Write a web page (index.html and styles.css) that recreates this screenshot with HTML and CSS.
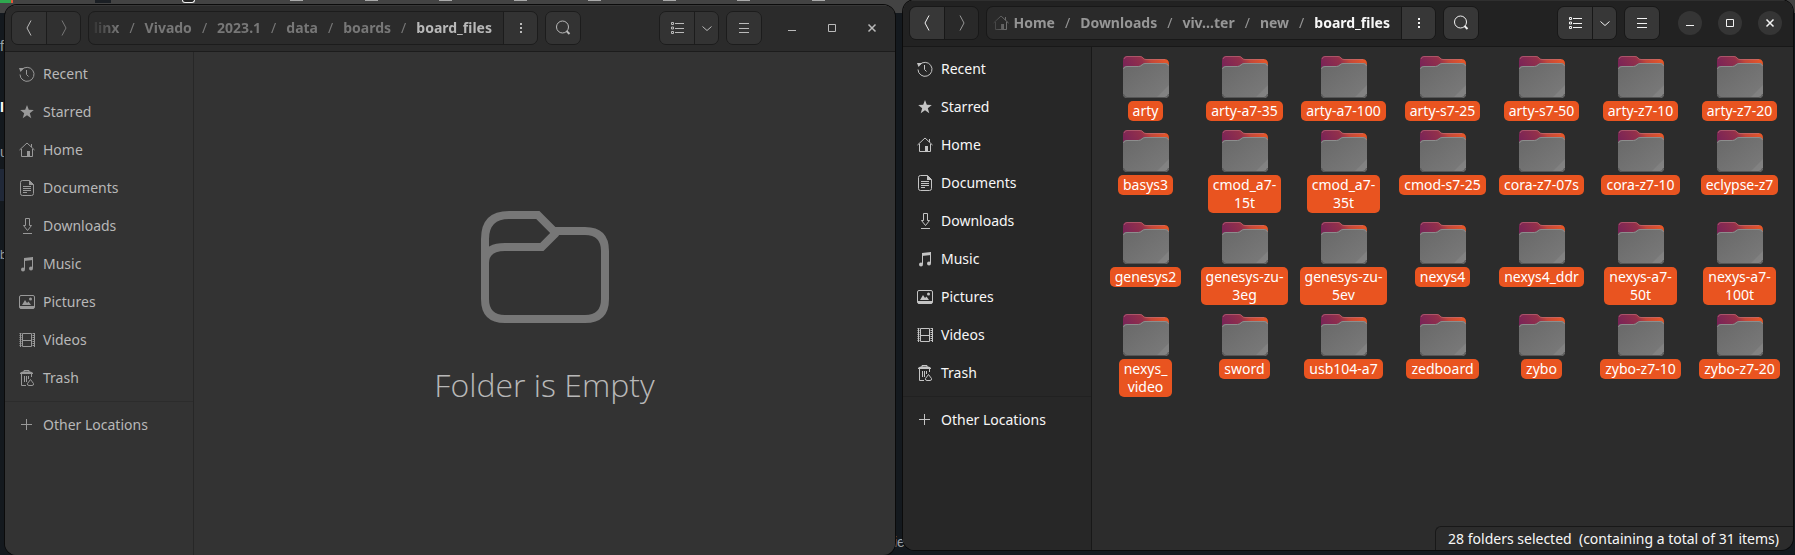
FILE: index.html
```html
<!DOCTYPE html>
<html lang="en">
<head>
<meta charset="utf-8">
<title>Files</title>
<link rel="stylesheet" href="styles.css">
</head>
<body>
<svg class="defs" aria-hidden="true">
  <defs>
    <linearGradient id="folder-back" x1="0" y1="0.4" x2="1" y2="0.1">
      <stop offset="0" stop-color="#7a2457"/><stop offset="0.42" stop-color="#93304b"/><stop offset="0.6" stop-color="#c4483a"/><stop offset="1" stop-color="#ee5a24"/>
    </linearGradient>
    <linearGradient id="folder-front" x1="0" y1="0" x2="1" y2="1">
      <stop offset="0" stop-color="#686868"/><stop offset="1" stop-color="#7b7b7b"/>
    </linearGradient>
  </defs>
  <symbol id="folder" viewBox="0 0 46 42">
    <path d="M0 5Q0 0 4 0H17Q19 0 20 1.500T23 3H41Q46 3 46 8V20H0Z" fill="url(#folder-back)"/>
    <path d="M1 3Q2 .5 4 .5H17Q19 .5 20 2T23 3.500H42" fill="none" stroke="#c0707a" stroke-opacity=".6"/>
    <path d="M0 13Q0 10 4 10H15Q17 10 18.500 8.500T22 7H42Q46 7 46 11V38Q46 42 42 42H4Q0 42 0 38Z" fill="url(#folder-front)"/>
    <path d="M.5 13Q1 10.500 4 10.500H15.500Q17.500 10.500 19 9T22 7.500H42Q45 7.500 45.500 10" fill="none" stroke="#8d8d8d"/>
    <path d="M46 29V38Q46 42 42 42H33Z" fill="#fff" fill-opacity=".07"/>
    <path d="M.5 38Q1 41.500 4 41.500H42Q45 41.500 45.500 38" fill="none" stroke="#555"/>
  </symbol>
  <symbol id="back" viewBox="0 0 16 16"><path d="M10 .5L6 8l4 7.500"/></symbol>
  <symbol id="forward" viewBox="0 0 16 16"><path d="M6 .5L10 8l-4 7.500"/></symbol>
  <symbol id="dots" viewBox="0 0 16 16"><path class="solid" d="M7 3h2v2H7zM7 7h2v2H7zM7 11h2v2H7z"/></symbol>
  <symbol id="search" viewBox="0 0 16 16"><circle cx="7.500" cy="7" r="6"/><path d="M11.500 11l3 3" stroke-width="2"/></symbol>
  <symbol id="list" viewBox="0 0 16 16"><path d="M2.500 2.500h2v2h-2zM2.500 7h2v2h-2zM2.500 11.500h2v2h-2zM6 3.500h9M6 8.500h9M6 12.500h9"/></symbol>
  <symbol id="down" viewBox="0 0 16 16"><path d="M3.500 6.500L8 10.500l4.500-4"/></symbol>
  <symbol id="menu" viewBox="0 0 16 16"><path d="M3 3.500h10M3 8.500h10M3 12.500h10"/></symbol>
  <symbol id="minimize" viewBox="0 0 16 16"><path d="M4 10.500h8"/></symbol>
  <symbol id="maximize" viewBox="0 0 16 16"><path d="M4.500 4.500h7v7h-7z"/></symbol>
  <symbol id="close" viewBox="0 0 16 16"><path d="M4.500 4.500l7 7m0-7l-7 7" stroke-width="1.500"/></symbol>
  <symbol id="recent" viewBox="0 0 16 16"><path d="M2.500 4A7 7 0 1 1 1 8.500"/><path d="M7.500 4v4.500l2 2"/><path class="solid" d="M0 2l5 0-3.500 4z"/></symbol>
  <symbol id="star" viewBox="0 0 16 16"><path class="solid" d="M8 1l1.800 4.800 5 .2-4 3.200 1.500 5L8 11.300l-4.300 2.900 1.500-5L1.200 6l5-.2z"/></symbol>
  <symbol id="home" viewBox="0 0 16 16"><path d="M.5 8L8 1l7.500 7M2.500 7v7.500h11V7M12.500 2v3"/><path class="solid" d="M8 9h3v5.500H8z"/></symbol>
  <symbol id="documents" viewBox="0 0 16 16"><path d="M3.500.5h7l4 4v9q0 2-2 2h-9q-2 0-2-2v-11q0-2 2-2zM4 6.500h8M4 8.500h8M4 10.500h8M4 12.500h4"/><path class="solid" d="M10 0v5h5z"/></symbol>
  <symbol id="downloads" viewBox="0 0 16 16"><path d="M6.500.5h4v7h2l-4 5-4-5h2zM4 15.500h9"/></symbol>
  <symbol id="music" viewBox="0 0 16 16"><path d="M5.500 13V2M13.500 12V1"/><path class="solid" d="M5 2l9-1v3l-9 1z"/><circle class="solid" cx="4" cy="13.500" r="2"/><circle class="solid" cx="12" cy="12.500" r="2"/></symbol>
  <symbol id="pictures" viewBox="0 0 16 16"><rect x=".5" y="1.500" width="15" height="13" rx="1.500"/><path class="solid" d="M1 12h14v2.500H1zM3 11l3-5 2 3 1.500-1.500L12 11z"/><circle class="solid" cx="11.500" cy="5" r="1.500"/></symbol>
  <symbol id="videos" viewBox="0 0 16 16"><path d="M3.500 1.500h9v13h-9zM3 8.500h10"/><path d="M1.500 1v14M14.500 1v14" stroke-width="2" stroke-dasharray="1 1"/><path d="M1.500 1v14M15.500 1v14"/></symbol>
  <symbol id="trash" viewBox="0 0 16 16"><path d="M5 2.500V.5h5v2M1 3.500h13M2.500 4v11.500H7M12.500 4v3M5.500 6v6M7.500 6v6M9.500 6v3"/><path class="solid" d="M1 3q1-1.500 3-1.500h7q2 0 3 1.500v1H1z"/><path d="M11.500 9.500l3 4q.5 2-1.500 2h-3q-2 0-1.500-2z"/></symbol>
  <symbol id="plus" viewBox="0 0 16 16"><path d="M2 7.500h11M7.500 2v11"/></symbol>
  <symbol id="empty" viewBox="0 0 16 16"><path d="M.5 7.500V4.500Q.5 1.500 3.500 1.500H7.100L9.100 3.500H13Q15.500 3.500 15.500 6V12Q15.500 14.500 13 14.500H3Q.5 14.500 .5 12V7.500Q.5 5.500 3 5.500H7.600L9.400 3.700"/></symbol>
</svg>

<div class="backdrop" aria-hidden="true">
  <i class="chip chip-green"></i><i class="chip chip-dark"></i><i class="chip chip-white"></i>
  <div class="tabs"><i></i><i></i><i></i><i></i><i></i><i></i><i></i><i></i></div>
  <i class="edge-band"></i>
  <span class="edge-text edge-f">f</span>
  <span class="edge-text edge-i">I</span>
  <span class="edge-text edge-u">u</span>
  <span class="edge-text edge-ba">ba</span>
  <span class="edge-text edge-ie">ie</span>
</div>

<main class="desktop">
  <section class="window inactive" aria-label="board_files, empty">
    <header class="header">
      <div class="group">
        <button class="btn" aria-label="Back"><svg class="icon"><use href="#back"/></svg></button>
        <button class="btn off" aria-label="Forward"><svg class="icon"><use href="#forward"/></svg></button>
      </div>
      <div class="group path">
        <nav class="crumbs" aria-label="Path">
          <button>linx</button><span>/</span><button>Vivado</button><span>/</span><button>2023.1</button><span>/</span><button>data</button><span>/</span><button>boards</button><span>/</span><button class="current">board_files</button>
        </nav>
        <button class="btn" aria-label="Folder menu"><svg class="icon"><use href="#dots"/></svg></button>
      </div>
      <div class="group"><button class="btn" aria-label="Search"><svg class="icon"><use href="#search"/></svg></button></div>
      <div class="group push">
        <button class="btn" aria-label="List view"><svg class="icon"><use href="#list"/></svg></button>
        <button class="btn narrow" aria-label="View options"><svg class="icon"><use href="#down"/></svg></button>
      </div>
      <div class="group"><button class="btn" aria-label="Menu"><svg class="icon"><use href="#menu"/></svg></button></div>
      <div class="controls">
        <button aria-label="Minimize"><svg class="icon"><use href="#minimize"/></svg></button>
        <button aria-label="Maximize"><svg class="icon"><use href="#maximize"/></svg></button>
        <button aria-label="Close"><svg class="icon"><use href="#close"/></svg></button>
      </div>
    </header>
    <div class="body">
      <nav class="sidebar" aria-label="Places">
        <a href="#"><svg class="icon"><use href="#recent"/></svg>Recent</a>
        <a href="#"><svg class="icon"><use href="#star"/></svg>Starred</a>
        <a href="#"><svg class="icon"><use href="#home"/></svg>Home</a>
        <a href="#"><svg class="icon"><use href="#documents"/></svg>Documents</a>
        <a href="#"><svg class="icon"><use href="#downloads"/></svg>Downloads</a>
        <a href="#"><svg class="icon"><use href="#music"/></svg>Music</a>
        <a href="#"><svg class="icon"><use href="#pictures"/></svg>Pictures</a>
        <a href="#"><svg class="icon"><use href="#videos"/></svg>Videos</a>
        <a href="#"><svg class="icon"><use href="#trash"/></svg>Trash</a>
        <hr>
        <a href="#"><svg class="icon"><use href="#plus"/></svg>Other Locations</a>
      </nav>
      <div class="content empty">
        <svg class="empty-icon"><use href="#empty"/></svg>
        <p>Folder is Empty</p>
      </div>
    </div>
  </section>

  <section class="window active" aria-label="board_files">
    <header class="header">
      <div class="group">
        <button class="btn" aria-label="Back"><svg class="icon"><use href="#back"/></svg></button>
        <button class="btn off" aria-label="Forward"><svg class="icon"><use href="#forward"/></svg></button>
      </div>
      <div class="group path">
        <nav class="crumbs" aria-label="Path">
          <button><svg class="icon"><use href="#home"/></svg>Home</button><span>/</span><button>Downloads</button><span>/</span><button>viv…ter</button><span>/</span><button>new</button><span>/</span><button class="current">board_files</button>
        </nav>
        <button class="btn" aria-label="Folder menu"><svg class="icon"><use href="#dots"/></svg></button>
      </div>
      <div class="group"><button class="btn" aria-label="Search"><svg class="icon"><use href="#search"/></svg></button></div>
      <div class="group push">
        <button class="btn" aria-label="List view"><svg class="icon"><use href="#list"/></svg></button>
        <button class="btn narrow" aria-label="View options"><svg class="icon"><use href="#down"/></svg></button>
      </div>
      <div class="group"><button class="btn" aria-label="Menu"><svg class="icon"><use href="#menu"/></svg></button></div>
      <div class="controls">
        <button aria-label="Minimize"><svg class="icon"><use href="#minimize"/></svg></button>
        <button aria-label="Maximize"><svg class="icon"><use href="#maximize"/></svg></button>
        <button aria-label="Close"><svg class="icon"><use href="#close"/></svg></button>
      </div>
    </header>
    <div class="body">
      <nav class="sidebar" aria-label="Places">
        <a href="#"><svg class="icon"><use href="#recent"/></svg>Recent</a>
        <a href="#"><svg class="icon"><use href="#star"/></svg>Starred</a>
        <a href="#"><svg class="icon"><use href="#home"/></svg>Home</a>
        <a href="#"><svg class="icon"><use href="#documents"/></svg>Documents</a>
        <a href="#"><svg class="icon"><use href="#downloads"/></svg>Downloads</a>
        <a href="#"><svg class="icon"><use href="#music"/></svg>Music</a>
        <a href="#"><svg class="icon"><use href="#pictures"/></svg>Pictures</a>
        <a href="#"><svg class="icon"><use href="#videos"/></svg>Videos</a>
        <a href="#"><svg class="icon"><use href="#trash"/></svg>Trash</a>
        <hr>
        <a href="#"><svg class="icon"><use href="#plus"/></svg>Other Locations</a>
      </nav>
      <div class="content">
        <ul class="files">
          <li><svg><use href="#folder"/></svg><span>arty</span></li>
          <li><svg><use href="#folder"/></svg><span>arty-a7-35</span></li>
          <li><svg><use href="#folder"/></svg><span>arty-a7-100</span></li>
          <li><svg><use href="#folder"/></svg><span>arty-s7-25</span></li>
          <li><svg><use href="#folder"/></svg><span>arty-s7-50</span></li>
          <li><svg><use href="#folder"/></svg><span>arty-z7-10</span></li>
          <li><svg><use href="#folder"/></svg><span>arty-z7-20</span></li>
          <li><svg><use href="#folder"/></svg><span>basys3</span></li>
          <li><svg><use href="#folder"/></svg><span>cmod_a7-<br>15t</span></li>
          <li><svg><use href="#folder"/></svg><span>cmod_a7-<br>35t</span></li>
          <li><svg><use href="#folder"/></svg><span>cmod-s7-25</span></li>
          <li><svg><use href="#folder"/></svg><span>cora-z7-07s</span></li>
          <li><svg><use href="#folder"/></svg><span>cora-z7-10</span></li>
          <li><svg><use href="#folder"/></svg><span>eclypse-z7</span></li>
          <li><svg><use href="#folder"/></svg><span>genesys2</span></li>
          <li><svg><use href="#folder"/></svg><span>genesys-zu-<br>3eg</span></li>
          <li><svg><use href="#folder"/></svg><span>genesys-zu-<br>5ev</span></li>
          <li><svg><use href="#folder"/></svg><span>nexys4</span></li>
          <li><svg><use href="#folder"/></svg><span>nexys4_ddr</span></li>
          <li><svg><use href="#folder"/></svg><span>nexys-a7-<br>50t</span></li>
          <li><svg><use href="#folder"/></svg><span>nexys-a7-<br>100t</span></li>
          <li><svg><use href="#folder"/></svg><span>nexys_<br>video</span></li>
          <li><svg><use href="#folder"/></svg><span>sword</span></li>
          <li><svg><use href="#folder"/></svg><span>usb104-a7</span></li>
          <li><svg><use href="#folder"/></svg><span>zedboard</span></li>
          <li><svg><use href="#folder"/></svg><span>zybo</span></li>
          <li><svg><use href="#folder"/></svg><span>zybo-z7-10</span></li>
          <li><svg><use href="#folder"/></svg><span>zybo-z7-20</span></li>
        </ul>
        <p class="status">28 folders selected&nbsp; (containing a total of 31 items)</p>
      </div>
    </div>
  </section>
</main>
</body>
</html>
```
FILE: styles.css
```css
* { box-sizing: border-box; }

body {
  margin: 0;
  background: #14191e;
  font: 14px/18px "Noto Sans", "Open Sans", sans-serif;
}

button {
  margin: 0;
  padding: 0;
  border: 0;
  background: none;
  color: inherit;
  font: inherit;
}

.defs { position: absolute; width: 0; height: 0; }

.icon {
  flex: none;
  width: 16px;
  height: 16px;
  fill: none;
  stroke: currentColor;
}
.solid { fill: currentColor; stroke: none; }

/* what shows of the windows behind */
.backdrop {
  position: absolute;
  inset: 0;
  overflow: hidden;
  background: linear-gradient(#434343 13px, #14191e 13px);
}
.chip { position: absolute; top: 0; height: 3px; }
.chip-green { left: 0; width: 13px; background: linear-gradient(90deg, #2fa84f 11px, #e5573a 11px); }
.chip-dark { left: 95px; width: 16px; background: #1b1f24; }
.chip-white { left: 182px; width: 13px; border: 1px solid #eee; border-top: 0; border-radius: 0 0 3px 3px; background: #222; }
.tabs { display: flex; justify-content: space-between; width: 535px; margin-left: 290px; }
.tabs i { width: 13px; height: 1px; background: #aaa; }
.edge-band { position: absolute; top: 169px; left: 0; width: 5px; height: 32px; background: #202838; }
.edge-text { position: absolute; left: 0; color: #9aa0a6; font-family: "Liberation Sans", sans-serif; }
.edge-f { top: 37px; }
.edge-i { top: 98px; color: #fff; font-weight: 700; }
.edge-u { top: 143px; }
.edge-ba { top: 246px; font-size: 12px; }
.edge-ie { top: 533px; left: 894px; }

.desktop {
  position: relative;
  display: flex;
  gap: 8px;
  min-height: 100vh;
  padding: 0 2px 0 5px;
}

.window {
  flex: 1;
  display: flex;
  flex-direction: column;
  min-width: 0;
  overflow: hidden;
  border-radius: 12px;
  box-shadow: 0 0 0 1px #0b0b0b;
}
.inactive {
  --head: #2b2b2b; --btn: #333; --btn-off: #303030; --trough: #2b2b2b; --line: #1c1c1c;
  --side: #333; --main: #333; --text: #b8b8b8; --icon: #999; --glyph: #bababa; --dim: #777; --rule: #2c2c2c; --ctl: none;
  margin-top: 5px;
}
.active {
  --head: #222; --btn: #373737; --btn-off: #292929; --trough: #2a2a2a; --line: #181818;
  --side: #272727; --main: #2c2c2c; --text: #f7f7f7; --icon: #c4c4c4; --glyph: #f2f2f2; --dim: #969696; --rule: #212121; --ctl: #353535;
  margin-bottom: 5px;
}

.header {
  display: flex;
  align-items: center;
  gap: 7px;
  height: 47px;
  padding: 0 11px 0 6px;
  border-bottom: 1px solid var(--line);
  box-shadow: inset 0 1px rgba(255, 255, 255, .06);
  background: var(--head);
  color: var(--glyph);
}
.group {
  display: flex;
  height: 34px;
  overflow: hidden;
  border: 1px solid var(--line);
  border-radius: 7px;
}
.btn {
  display: flex;
  flex: none;
  align-items: center;
  justify-content: center;
  width: 34px;
  background: var(--btn);
}
.btn + .btn, .crumbs + .btn { border-left: 1px solid var(--line); }
.narrow { width: 24px; }
.off { background: var(--btn-off); color: var(--dim); }
.path { flex: 0 1 450px; min-width: 0; background: var(--trough); }
.push { margin-left: auto; }

.crumbs {
  flex: 1;
  display: flex;
  align-items: center;
  justify-content: flex-end;
  gap: 10px;
  min-width: 0;
  overflow: hidden;
  padding-right: 11px;
  color: var(--dim);
  font-weight: 700;
  mask-image: linear-gradient(90deg, transparent, #000 30px);
}
.crumbs span { font-weight: 400; }
.crumbs button { display: flex; align-items: center; gap: 4px; }
.crumbs .current { color: var(--text); }

.controls { display: flex; gap: 16px; margin-left: 11px; }
.controls button {
  display: flex;
  align-items: center;
  justify-content: center;
  width: 24px;
  height: 24px;
  border-radius: 50%;
  background: var(--ctl);
}

.body { flex: 1; display: flex; background: var(--main); color: var(--text); }
.sidebar {
  flex: none;
  width: 189px;
  padding: 3px 0;
  border-right: 1px solid var(--line);
  background: var(--side);
}
.inactive .sidebar { border-color: #272727; }
.sidebar a {
  display: flex;
  align-items: center;
  gap: 8px;
  height: 38px;
  padding: 0 14px;
  color: inherit;
  text-decoration: none;
}
.sidebar .icon { color: var(--icon); }
.sidebar hr { margin: 4px 0; border: 0; border-top: 1px solid var(--rule); }

.content { flex: 1; display: flex; flex-direction: column; min-width: 0; }
.empty { align-items: center; justify-content: center; gap: 30px; padding-top: 4px; }
.empty p {
  margin: 0;
  font: 300 32px/48px "Open Sans", "Noto Sans", sans-serif;
}
.empty-icon { width: 128px; height: 128px; fill: none; stroke: #777; }

.files {
  display: grid;
  grid-template-columns: repeat(7, 1fr);
  gap: 9px 0;
  margin: 0;
  padding: 9px 4px 0;
  list-style: none;
}
.files li { display: flex; flex-direction: column; align-items: center; gap: 3px; }
.files svg { width: 46px; height: 42px; }
.files span {
  padding: 1px 5px;
  border-radius: 5px;
  background: #e95420;
  color: #fff;
  text-align: center;
  white-space: nowrap;
}

.status {
  align-self: flex-end;
  margin: auto 0 0;
  padding: 3px 14px 2px 12px;
  border: 1px solid #181818;
  border-width: 1px 0 0 1px;
  border-radius: 6px 0 0 0;
}
```
